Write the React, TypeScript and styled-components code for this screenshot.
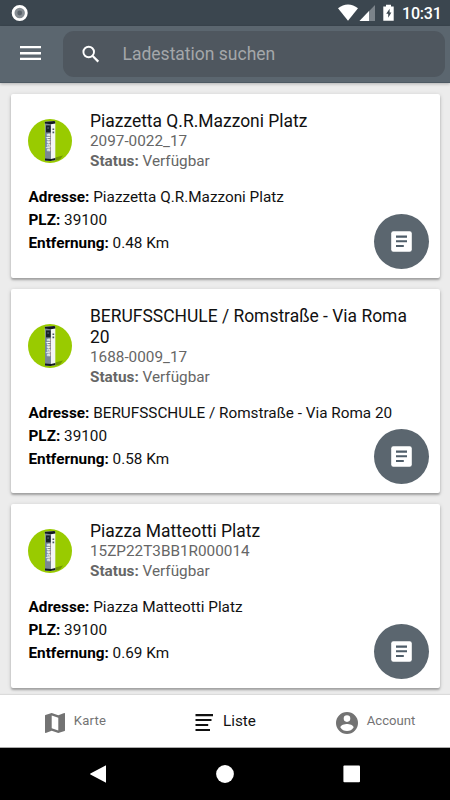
import React from "react";
import styled, { createGlobalStyle } from "styled-components";

const GlobalStyle = createGlobalStyle`
  *, *::before, *::after { box-sizing: border-box; }
  html, body { margin: 0; padding: 0; }
  body { font-family: Roboto, "Liberation Sans", sans-serif; background: #000; overflow: hidden; }
  svg { display: block; flex: none; }
`;

const Screen = styled.div`
  width: 450px;
  height: 800px;
  display: flex;
  flex-direction: column;
  overflow: hidden;
  background: #ececec;
`;

const StatusBar = styled.div`
  height: 26px;
  flex: none;
  display: flex;
  align-items: center;
  justify-content: space-between;
  padding: 0 9px 0 11px;
  background: #3b464f;
  color: #fff;
`;

const StatusIcons = styled.div`
  display: flex;
  align-items: center;
`;

const Clock = styled.span`
  width: 39px;
  margin-left: 7px;
  font-size: 16px;
  line-height: 26px;
  padding-top: 2px;
  letter-spacing: -0.2px;
  font-weight: 500;
  white-space: nowrap;
`;

const Toolbar = styled.header`
  position: relative;
  z-index: 1;
  height: 57px;
  flex: none;
  display: flex;
  align-items: center;
  padding: 0 5px 0 20px;
  background: #5b666f;
  border-bottom: 1px solid #4d5963;
  box-shadow: 0 1px 3px rgba(0, 0, 0, 0.25);
`;

const MenuButton = styled.button`
  width: 42.5px;
  padding: 0;
  border: 0;
  background: none;
  margin-top: -3px;
`;

const SearchBox = styled.label`
  flex: 1;
  height: 46px;
  margin-top: 0;
  display: flex;
  align-items: center;
  padding-left: 19.5px;
  gap: 22.5px;
  border-radius: 11px;
  background: #4f575f;
`;

const Placeholder = styled.span`
  color: #a4a7aa;
  font-size: 17.5px;
  line-height: 22px;
  margin-top: -1px;
`;

const List = styled.main`
  flex: 1;
  min-height: 0;
  padding: 11px 10px 0 11px;
  display: flex;
  flex-direction: column;
  gap: 11px;
  overflow: hidden;
`;

const Card = styled.article<{ $height: number }>`
  position: relative;
  flex: none;
  height: ${(p) => p.$height}px;
  padding: 16.5px 17px 0 17.5px;
  border-radius: 2px;
  background: #fff;
  box-shadow: 0 2px 2px rgba(0, 0, 0, 0.24), 0 1px 4px rgba(0, 0, 0, 0.16);
`;

const CardHead = styled.div`
  display: flex;
  align-items: center;
  gap: 18px;
  margin-left: -0.5px;
`;

const HeadText = styled.div`
  flex: 1;
  min-width: 0;
`;

const Title = styled.h2`
  margin: 0;
  font-size: 17.45px;
  font-weight: 400;
  line-height: 21.2px;
  color: #111;
`;

const Meta = styled.p`
  margin: 0;
  font-size: 15.3px;
  line-height: 19.7px;
  color: #666;
`;

const MetaGroup = styled.div`
  padding-top: 0.4px;
  margin-bottom: -0.4px;
`;

const Details = styled.div`
  margin-top: 14.9px;
  font-size: 15.3px;
  line-height: 23px;
  color: #111;
`;

const Detail = styled.p`
  margin: 0;
  b { color: #000; }
`;

const InfoButton = styled.button`
  position: absolute;
  right: 11px;
  bottom: 9.5px;
  width: 55px;
  height: 55px;
  padding: 0;
  display: grid;
  place-items: center;
  border: 0;
  border-radius: 50%;
  background: #5b666f;
`;

const Tabs = styled.nav`
  height: 53px;
  flex: none;
  display: grid;
  grid-template-columns: repeat(3, 1fr);
  background: #fff;
  border-bottom: 1px solid #aaa;
  box-shadow: 0 -1px 1px rgba(0, 0, 0, 0.07);
`;

const Tab = styled.a<{ $active?: boolean }>`
  display: flex;
  align-items: center;
  justify-content: center;
  gap: 9px;
  padding-top: 3px;
  padding-left: 1px;
  color: ${(p) => (p.$active ? "#111" : "#737373")};
  font-size: ${(p) => (p.$active ? 15.3 : 13.1)}px;
`;

const TabLabel = styled.span<{ $spacing?: number }>`
  line-height: 20px;
  margin-top: -3px;
  letter-spacing: ${(p) => p.$spacing ?? 0}px;
`;

const SystemBar = styled.footer`
  height: 52px;
  flex: none;
  display: flex;
  align-items: center;
  justify-content: center;
  gap: 109px;
  background: #000;
`;

const RecordIcon = () => (
  <svg width="18" height="18" viewBox="0 0 18 18">
    <circle cx="8.7" cy="9" r="6.6" fill="#858c92" stroke="#fff" strokeWidth="2.8" />
    <circle cx="8.7" cy="9" r="2.4" fill="#5b646c" />
  </svg>
);

const SignalIcons = () => (
  <svg width="57" height="18" viewBox="0 0 57 18">
    <path d="M0 4.2C6-.9 14-.9 20 4.2L10 16.8Z" fill="#fff" />
    <path d="M37 1v16H21.5Z" fill="#7b838a" />
    <path d="M31 7v10H21.5Z" fill="#fff" />
    <path d="M48 .7h5v1.7h2.7v14.4H45.3V2.4H48Z" fill="#fff" />
    <path d="m51.6 4.8-3.4 5h2v4l3.2-5.2h-1.8Z" fill="#3b464f" />
  </svg>
);

const MenuIcon = () => (
  <svg width="22" height="16" viewBox="0 0 22 16">
    <path d="M0 2.1h21M0 8.2h21M0 13.9h21" stroke="#fff" strokeWidth="2.4" />
  </svg>
);

const SearchIcon = () => (
  <svg width="18" height="18" viewBox="0 0 18 18" fill="none" stroke="#fff">
    <circle cx="6.7" cy="7" r="5.3" strokeWidth="1.9" />
    <path d="m10.7 11 5.6 5.6" strokeWidth="2.2" />
  </svg>
);

const StationAvatar = () => (
  <svg width="44" height="44" viewBox="0 0 44 44">
    <circle cx="22" cy="22" r="22" fill="#99cb00" />
    <path d="m25 39 10-2.5-3 4-7 1.5Z" fill="#5b7d00" opacity=".65" />
    <path d="m16.8 2.8 9.5-.7 1 .9v38.3l-10 .7Z" fill="#f3f5f6" />
    <path d="m17 4 6 .7v37H17Z" fill="#7b8795" />
    <path d="m16.8 2.8 9.7-.7.8 1v1.5l-4.5.7-6-.7ZM17 39.6l6 .4 4.3-.9v1.9l-4.6 1.1-5.7-.5Z" fill="#101820" />
    <path d="M18 6.4h4.7v7H18Z" fill="#17212a" />
    <path d="M19.2 9h1.9M24.5 10.2h1.7M24.5 13.4h1.7" stroke="#4a5864" strokeWidth="1.6" />
    <text transform="translate(21.8 32.5) rotate(-90)" fontFamily="Roboto, sans-serif" fontSize="5.8" fontWeight="700" textLength="18" fill="#fff">alperia</text>
  </svg>
);

const DocumentIcon = () => (
  <svg width="21" height="21" viewBox="0 0 21 21">
    <rect x=".2" y=".2" width="20.6" height="20.6" rx="2.2" fill="#fff" />
    <path d="M5 5.6h11M5 10.3h11M5 15h7.8" stroke="#4f5d69" strokeWidth="2.1" />
  </svg>
);

const MapIcon = () => (
  <svg width="20" height="20" viewBox="0 0 20 20">
    <path fillRule="evenodd" fill="currentColor" d="M19.3.1 13.3 2.3 6.7 0 .4 2.1Q0 2.3 0 2.8v16.5q0 .7.7.6l6-2.2 6.6 2.3 6.3-2.1q.4-.2.4-.7V.6Q20 0 19.3.1ZM6.7 2.4l6.6 2.3v12.9l-6.6-2.3Z" />
  </svg>
);

const ListIcon = () => (
  <svg width="19" height="19" viewBox="0 0 19 19">
    <path d="M.5 2.1H18M.5 7h16M.5 12h12.7M.5 17H15" stroke="currentColor" strokeWidth="2.2" />
  </svg>
);

const AccountIcon = () => (
  <svg width="22" height="22" viewBox="0 0 22 22">
    <path fillRule="evenodd" fill="currentColor" d="M11 0a11 11 0 1 0 0 22 11 11 0 0 0 0-22Zm0 3.3a3.3 3.3 0 1 1 0 6.6 3.3 3.3 0 0 1 0-6.6Zm0 15.6a7.9 7.9 0 0 1-6.6-3.5c0-2.2 4.4-3.4 6.6-3.4s6.6 1.2 6.6 3.4a7.9 7.9 0 0 1-6.6 3.5Z" />
  </svg>
);

const SystemIcon = ({ kind }: { kind: "back" | "home" | "recent" }) => (
  <svg width="18" height="18" viewBox="0 0 18 18" fill="#fff">
    {kind === "back" && <path d="M16.6.4Q17 .1 17 .6v16.8q0 .5-.4.2L1.4 9.4q-.6-.4 0-.8Z" />}
    {kind === "home" && <circle cx="9" cy="9" r="8.9" />}
    {kind === "recent" && <rect x=".4" y=".6" width="16.6" height="16.6" rx="1" />}
  </svg>
);

const stations = [
  { name: "Piazzetta Q.R.Mazzoni Platz", code: "2097-0022_17", distance: "0.48", height: 184 },
  { name: "BERUFSSCHULE / Romstraße - Via Roma 20", code: "1688-0009_17", distance: "0.58", height: 204.4 },
  { name: "Piazza Matteotti Platz", code: "15ZP22T3BB1R000014", distance: "0.69", height: 184 },
];

export default function App() {
  return (
    <>
      <GlobalStyle />
      <Screen>
        <StatusBar>
          <RecordIcon />
          <StatusIcons>
            <SignalIcons />
            <Clock>10:31</Clock>
          </StatusIcons>
        </StatusBar>
        <Toolbar>
          <MenuButton aria-label="Menü"><MenuIcon /></MenuButton>
          <SearchBox>
            <SearchIcon />
            <Placeholder>Ladestation suchen</Placeholder>
          </SearchBox>
        </Toolbar>
        <List>
          {stations.map((s) => (
            <Card key={s.code} $height={s.height}>
              <CardHead>
                <StationAvatar />
                <HeadText>
                  <Title>{s.name}</Title>
                  <MetaGroup>
                    <Meta>{s.code}</Meta>
                    <Meta><b>Status:</b> Verfügbar</Meta>
                  </MetaGroup>
                </HeadText>
              </CardHead>
              <Details>
                <Detail><b>Adresse:</b> {s.name}</Detail>
                <Detail><b>PLZ:</b> 39100</Detail>
                <Detail><b>Entfernung:</b> {s.distance} Km</Detail>
              </Details>
              <InfoButton aria-label="Details"><DocumentIcon /></InfoButton>
            </Card>
          ))}
        </List>
        <Tabs>
          <Tab><MapIcon /><TabLabel $spacing={0.2}>Karte</TabLabel></Tab>
          <Tab $active><ListIcon /><TabLabel>Liste</TabLabel></Tab>
          <Tab><AccountIcon /><TabLabel>Account</TabLabel></Tab>
        </Tabs>
        <SystemBar>
          <SystemIcon kind="back" />
          <SystemIcon kind="home" />
          <SystemIcon kind="recent" />
        </SystemBar>
      </Screen>
    </>
  );
}
